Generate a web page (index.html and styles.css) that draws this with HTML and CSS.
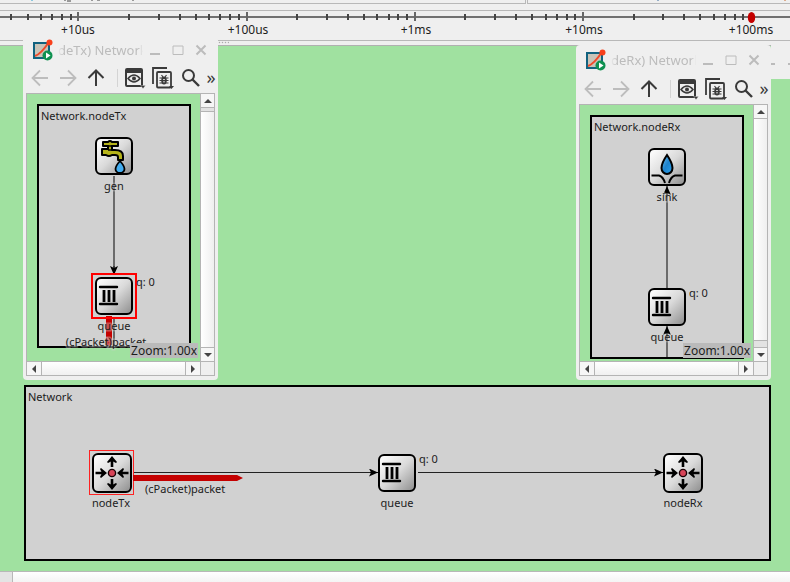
FILE: index.html
```html
<!DOCTYPE html>
<html lang="en">
<head>
<meta charset="utf-8">
<title>Network</title>
<link rel="stylesheet" href="styles.css">
</head>
<body>
<svg class="sprites" width="0" height="0" aria-hidden="true">
  <defs>
    <linearGradient id="tile" x1="0" y1="0" x2="1" y2="1">
      <stop offset="0.1" stop-color="#fafafa"/><stop offset="0.5" stop-color="#dadada"/><stop offset="1" stop-color="#8c8c8c"/>
    </linearGradient>
    <linearGradient id="water" x1="0" y1="0" x2="1" y2="1">
      <stop offset="0" stop-color="#7cc4ee"/><stop offset="0.5" stop-color="#1d82cc"/><stop offset="1" stop-color="#2da3ee"/>
    </linearGradient>
    <symbol id="queue" viewBox="0 0 38 38">
      <rect x="1" y="1" width="36" height="36" rx="5" fill="url(#tile)" stroke="#000" stroke-width="2"/>
      <path d="M5 10h17M5 27h17" stroke="#000" stroke-width="2.4" stroke-linecap="round"/>
      <path d="M9 13v12M14 13v12M19 13v12" stroke="#000" stroke-width="2.800"/>
    </symbol>
    <symbol id="router" viewBox="0 0 40 40">
      <rect x="1" y="1" width="38" height="38" rx="5" fill="url(#tile)" stroke="#000" stroke-width="2"/>
      <path d="M20 14V6M20 26v8M3.500 20H12M36.500 20H28" stroke="#000" stroke-width="2.6"/>
      <path d="M20 3l5 6-1 1-4-2-4 2-1-1zM20 37l5-6-1-1-4 2-4-2-1 1zM15 20l-6-5-1 1 2 4-2 4 1 1zM25 20l6-5 1 1-2 4 2 4-1 1z" fill="#000"/>
      <circle cx="20" cy="20" r="3.600" fill="#d84458" stroke="#1a0005" stroke-width="1.400"/>
    </symbol>
    <symbol id="tap" viewBox="0 0 38 38">
      <rect x="1" y="1" width="36" height="36" rx="5" fill="url(#tile)" stroke="#000" stroke-width="2"/>
      <path d="M8 5h5q2-2 4 0h6v4h-6v4h3q8 0 8 6v4h-5v-3q0-2-3-2h-3q-3 2-6 0H7v-6h6V9H8z" fill="#b5b319" stroke="#000" stroke-width="2" stroke-linejoin="round"/>
      <path d="M13 9h4M13 13h4" stroke="#000" stroke-width="1.500"/>
      <path d="M25 24q-4.500 5-4.500 8a4.500 4 0 0 0 9 0q0-3-4.500-8z" fill="#43adf0" stroke="#000" stroke-width="1.800"/>
    </symbol>
    <symbol id="sink" viewBox="0 0 38 38">
      <rect x="1" y="1" width="36" height="36" rx="5" fill="url(#tile)" stroke="#000" stroke-width="2"/>
      <path d="M19 7q-5.500 8-5.500 13a5.500 6 0 0 0 11 0q0-5-5.500-13z" fill="url(#water)" stroke="#000" stroke-width="2"/>
      <path d="M3.500 27.500H11q4 1 6 7.500M34.500 27.500H27q-4 1-6 7.500" fill="none" stroke="#000" stroke-width="2"/>
    </symbol>
    <symbol id="app" viewBox="0 0 22 22">
      <rect x="2" y="4" width="15" height="15" fill="#c9c4b8" stroke="#12627f" stroke-width="2"/>
      <path d="M3 17Q9 15 17 3" fill="none" stroke="#f04a2a" stroke-width="2"/>
      <circle cx="17.500" cy="3.500" r="3" fill="#f8401c"/>
      <circle cx="15.500" cy="16.500" r="5" fill="#0f9150"/><path d="M14 13.500l4.500 3-4.500 3z" fill="#fff"/>
    </symbol>
    <symbol id="back" viewBox="0 0 20 20"><path d="M18 10H2.500M10 2.500L2.500 10l7.500 7.500" fill="none" stroke="currentColor" stroke-width="1.800"/></symbol>
    <symbol id="forward" viewBox="0 0 20 20"><path d="M2 10h15.500M10 2.500l7.500 7.500-7.500 7.500" fill="none" stroke="currentColor" stroke-width="1.800"/></symbol>
    <symbol id="up" viewBox="0 0 20 20"><path d="M10 18V3M2.500 10L10 2.500l7.500 7.500" fill="none" stroke="currentColor" stroke-width="2"/></symbol>
    <symbol id="view" viewBox="0 0 22 22">
      <path d="M3 2h14q1 0 1 1v15q0 1-1 1H3q-1 0-1-1V3q0-1 1-1z" fill="none" stroke="currentColor" stroke-width="2"/><path d="M2 3h16v3H2z" fill="currentColor"/>
      <path d="M4 11.500q6-7 12 0q-6 7-12 0z" fill="none" stroke="currentColor" stroke-width="1.500"/><circle cx="10" cy="11.500" r="2" fill="currentColor"/>
      <path d="M16.500 18.500h5l-2.500 3z" fill="currentColor" stroke="#efefef" stroke-width=".3"/>
    </symbol>
    <symbol id="debug" viewBox="0 0 22 22">
      <path d="M1 17V1h14" fill="none" stroke="currentColor" stroke-width="1.800"/><rect x="5" y="5" width="14" height="15.500" rx="1" fill="none" stroke="currentColor" stroke-width="1.800"/>
      <ellipse cx="12" cy="13.500" rx="2.800" ry="4" fill="currentColor"/><path d="M7.500 11h9M7.500 13.500h9M7.500 16h9M9.500 8l1.500 2M14.500 8L13 10" stroke="currentColor" stroke-width="1.200"/><path d="M11 12.500h2M11 14.800h2" stroke="#efefef" stroke-width=".8"/>
      <path d="M17 19h5l-2.500 3z" fill="currentColor"/>
    </symbol>
    <symbol id="find" viewBox="0 0 20 20"><circle cx="7.500" cy="7.500" r="5.500" fill="none" stroke="currentColor" stroke-width="2"/><path d="M11.500 11.500l6.500 6.500" stroke="currentColor" stroke-width="2.400"/></symbol>
    <marker id="head" viewBox="0 0 9 8" markerWidth="9" markerHeight="8" refX="9" refY="4" orient="auto" markerUnits="userSpaceOnUse"><path d="M0 0l9 4-9 4 2-4z"/></marker>
  </defs>
</svg>

<header>
  <div class="strip">
    <div class="strip-left"><svg width="200" height="3"><path d="M64 0h2M67 1h4M91 0h2M97 0h3M132 0h2" stroke="#444"/><path d="M31 0h2" stroke="#2b9fce"/></svg></div>
    <div class="strip-right"><svg width="262" height="3"><path d="M129 0h2" stroke="#3d6fa0"/><path d="M256 0h2" stroke="#c96a2c"/></svg></div>
  </div>
  <svg class="ruler" width="100%" height="29">
    <line x1="0" y1="6" x2="100%" y2="6" stroke="#717171" stroke-width="2"/>
    <path d="M11 3v6M28 3v6M41 3v6M52 3v6M62 3v6M71 3v6M129 3v6M159 3v6M180 3v6M196 3v6M209 3v6M220 3v6M230 3v6M239 3v6M297 3v6M327 3v6M348 3v6M364 3v6M377 3v6M389 3v6M398 3v6M407 3v6M465 3v6M495 3v6M516 3v6M532 3v6M546 3v6M557 3v6M567 3v6M575 3v6M634 3v6M663 3v6M684 3v6M700 3v6M714 3v6M725 3v6M735 3v6M743 3v6" stroke="#444" stroke-width="2"/>
    <path d="M78 1v9M247 1v9M415 1v9M583 1v9" stroke="#666" stroke-width="2"/>
    <ellipse cx="751.500" cy="6.500" rx="3.700" ry="5.500" fill="#c40000"/>
    <g text-anchor="middle"><text x="78" y="23">+10us</text><text x="248" y="23">+100us</text><text x="416" y="23">+1ms</text><text x="584" y="23">+10ms</text><text x="751" y="23">+100ms</text></g>
  </svg>
  <div class="splitter"></div>
</header>

<main class="desktop">
  <div class="remnant"><svg width="19" height="34"><path d="M0 19h4M17 19h2" stroke="#bbb" stroke-width="2"/></svg></div>

  <section class="network">
    <svg width="100%" height="172" viewBox="26 387 743 172" preserveAspectRatio="xMinYMin meet" role="img" aria-label="Network">
      <text x="28" y="401">Network</text>
      <path d="M134 472.500H378M418 472.500H663" stroke="#222"/>
      <path d="M370 472.500H378" stroke="#111" marker-end="url(#head)"/><path d="M655 472.500H663" stroke="#111" marker-end="url(#head)"/>
      <use href="#router" x="92" y="453" width="40" height="40"/><rect x="89.500" y="450.500" width="44" height="44" fill="none" stroke="#f22"/>
      <path d="M133 475h104l6 3-6 3H133z" fill="#c40000"/>
      <use href="#queue" x="378" y="454" width="38" height="38"/>
      <use href="#router" x="663" y="453" width="40" height="40"/>
      <text x="145" y="493">(cPacket)packet</text><text x="419" y="463">q: 0</text>
      <g text-anchor="middle"><text x="111" y="507">nodeTx</text><text x="397" y="507">queue</text><text x="683" y="507">nodeRx</text></g>
    </svg>
  </section>

  <section class="window window-tx">
    <div class="titlebar"><svg width="22" height="22"><use href="#app"/></svg><span class="title">deTx) Network</span>
      <button aria-label="Minimize"><svg width="12" height="12"><path d="M1 10h10"/></svg></button><button aria-label="Maximize"><svg width="12" height="12"><path d="M1 2h10v8.500H1z"/></svg></button><button aria-label="Close"><svg width="12" height="12"><path d="M1.500 1.500l9 9M10.500 1.500l-9 9"/></svg></button></div>
    <div class="toolbar"><button disabled aria-label="Back"><svg width="20" height="20"><use href="#back"/></svg></button><button disabled aria-label="Forward"><svg width="20" height="20"><use href="#forward"/></svg></button><button aria-label="Parent"><svg width="20" height="20"><use href="#up"/></svg></button><i></i><button aria-label="View"><svg width="22" height="22"><use href="#view"/></svg></button><button aria-label="Debug"><svg width="22" height="22"><use href="#debug"/></svg></button><button aria-label="Find"><svg width="20" height="20"><use href="#find"/></svg></button><button class="more" aria-label="More">»</button></div>
    <div class="view">
      <div class="viewport">
        <svg width="174" height="267" viewBox="27 94 174 267" role="img" aria-label="Network.nodeTx">
          <rect x="38" y="105" width="152" height="242" fill="#d1d1d1" stroke="#000" stroke-width="2"/>
          <text x="41" y="120">Network.nodeTx</text>
          <path d="M114 176V270M114 318V347" stroke="#6b6b6b" stroke-width="2"/><path d="M114 266V275" stroke="#111" marker-end="url(#head)"/>
          <use href="#tap" x="95" y="137" width="38" height="38"/><use href="#queue" x="95" y="277" width="38" height="38"/>
          <path d="M106 316h6v29l-3 1-3-1z" fill="#c40000"/>
          <rect x="92" y="274" width="44" height="44" fill="none" stroke="#f00" stroke-width="2"/>
          <g text-anchor="middle"><text class="over" x="114" y="190">gen</text><text class="over" x="114" y="330">queue</text><text class="over" x="106" y="346">(cPacket)packet</text></g><text x="136" y="286">q: 0</text>
        </svg>
        <span class="zoom">Zoom:1.00x</span>
      </div>
      <div class="vbar"><button aria-label="Scroll up"><svg width="8" height="4"><path d="M0 4l4-4 4 4z"/></svg></button><div class="groove"></div><div class="handle"></div><button aria-label="Scroll down"><svg width="8" height="4"><path d="M0 0l4 4 4-4z"/></svg></button></div>
      <div class="hbar"><button aria-label="Scroll left"><svg width="4" height="8"><path d="M4 0L0 4l4 4z"/></svg></button><div class="handle"></div><button aria-label="Scroll right"><svg width="4" height="8"><path d="M0 0l4 4-4 4z"/></svg></button></div>
      <div class="corner"></div>
    </div>
  </section>

  <section class="window window-rx">
    <div class="titlebar"><svg width="22" height="22"><use href="#app"/></svg><span class="title">deRx) Network</span>
      <button aria-label="Minimize"><svg width="12" height="12"><path d="M1 10h10"/></svg></button><button aria-label="Maximize"><svg width="12" height="12"><path d="M1 2h10v8.500H1z"/></svg></button><button aria-label="Close"><svg width="12" height="12"><path d="M1.500 1.500l9 9M10.500 1.500l-9 9"/></svg></button></div>
    <div class="toolbar"><button disabled aria-label="Back"><svg width="20" height="20"><use href="#back"/></svg></button><button disabled aria-label="Forward"><svg width="20" height="20"><use href="#forward"/></svg></button><button aria-label="Parent"><svg width="20" height="20"><use href="#up"/></svg></button><i></i><button aria-label="View"><svg width="22" height="22"><use href="#view"/></svg></button><button aria-label="Debug"><svg width="22" height="22"><use href="#debug"/></svg></button><button aria-label="Find"><svg width="20" height="20"><use href="#find"/></svg></button><button class="more" aria-label="More">»</button></div>
    <div class="view">
      <div class="viewport">
        <svg width="174" height="256" viewBox="580 105 174 256" role="img" aria-label="Network.nodeRx">
          <rect x="591" y="116" width="152" height="242" fill="#d1d1d1" stroke="#000" stroke-width="2"/>
          <text x="594" y="131">Network.nodeRx</text>
          <path d="M667 288V192M667 357V332" stroke="#6b6b6b" stroke-width="2"/>
          <path d="M667 195V186" stroke="#111" marker-end="url(#head)"/><path d="M667 335V326" stroke="#111" marker-end="url(#head)"/>
          <use href="#sink" x="648" y="148" width="38" height="38"/><use href="#queue" x="648" y="288" width="38" height="38"/>
          <g text-anchor="middle"><text class="over" x="667" y="201">sink</text><text class="over" x="667" y="341">queue</text></g><text x="689" y="297">q: 0</text>
        </svg>
        <span class="zoom">Zoom:1.00x</span>
      </div>
      <div class="vbar"><button aria-label="Scroll up"><svg width="8" height="4"><path d="M0 4l4-4 4 4z"/></svg></button><div class="handle"></div><div class="groove wide"></div><button aria-label="Scroll down"><svg width="8" height="4"><path d="M0 0l4 4 4-4z"/></svg></button></div>
      <div class="hbar"><button aria-label="Scroll left"><svg width="4" height="8"><path d="M4 0L0 4l4 4z"/></svg></button><div class="handle"></div><button aria-label="Scroll right"><svg width="4" height="8"><path d="M0 0l4 4-4 4z"/></svg></button></div>
      <div class="corner"></div>
    </div>
  </section>
</main>
<footer class="scroll"><div class="scroll-groove"></div><div class="scroll-handle"></div></footer>
</body>
</html>
```
FILE: styles.css
```css
* { box-sizing: border-box; }
body {
  margin: 0;
  min-height: 100vh;
  display: flex;
  flex-direction: column;
  overflow: hidden;
  background: #efefef;
  color: #1c1c1c;
  font: 11px/16px "Noto Sans", "Open Sans", sans-serif;
}
svg { display: block; }
text { fill: #1c1c1c; }
.sprites { position: absolute; }

.strip { display: flex; gap: 1px; height: 11px; padding-bottom: 7px; border-bottom: 1px solid #b8b8b8; }
.strip-left, .strip-right { overflow: hidden; border-bottom: 1px solid #b8b8b8; height: 4px; }
.strip-left { flex: 2; border-right: 1px solid #b8b8b8; }
.strip-right { flex: 1; border-left: 1px solid #b8b8b8; }
.ruler { border-bottom: 1px solid #b8b8b8; height: 30px; font-size: 12px; }
.splitter { width: 11px; height: 4px; margin-left: 218px; background: radial-gradient(circle, #aaa 30%, transparent 50%) 0 0 / 3px 3px repeat-x; }

.desktop { position: relative; flex: 1; background: #a0e1a0; border-top: 1px solid #b0b0b0; }
.network { position: absolute; left: 24px; right: 19px; top: 339px; height: 176px; background: #d1d1d1; border: 2px solid #000; }
.remnant { position: absolute; right: 0; top: -1px; background: #efefef; }

.window { position: absolute; display: flex; flex-direction: column; width: 195px; padding: 0 3px 4px; background: #efefef; border-radius: 4px; }
.window-tx { left: 23px; top: -10px; }
.window-rx { left: 576px; top: -1px; }
.titlebar { display: flex; align-items: center; height: 27px; padding: 0 3px 0 6px; color: #bcbcbc; }
.window-rx .titlebar { height: 29px; }
.title { flex: 1; min-width: 0; margin-left: 4px; overflow: hidden; white-space: nowrap; font-size: 13px; line-height: 20px; mask-image: linear-gradient(90deg, transparent, #000 6px, #000 80px, transparent); }
button { display: flex; align-items: center; justify-content: center; margin: 0; padding: 0; border: 0; background: none; color: #3a3a3a; font: inherit; }
.titlebar button { width: 23px; height: 20px; }
.titlebar button path { fill: none; stroke: #bcbcbc; stroke-width: 2; }
.titlebar button:nth-of-type(2) path { stroke-width: 1; }
.toolbar { display: flex; align-items: center; height: 30px; }
.toolbar button { flex: none; width: 28px; height: 28px; }
.toolbar button:disabled { color: #bdbdbd; }
.toolbar i { width: 8px; flex: none; height: 18px; border-right: 1px solid #d4d4d4; margin-right: 3px; }
.toolbar .more { width: 12px; padding-bottom: 2px; font-size: 18px; }

.view { display: grid; grid-template-columns: 1fr 14px; grid-template-rows: 1fr 14px; border: 1px solid #b4b4b4; background: #a0e1a0; }
.viewport { position: relative; overflow: hidden; }
.over { paint-order: stroke; stroke: rgba(209, 209, 209, 0.4); stroke-width: 3px; }
.zoom { position: absolute; right: 2px; bottom: 3px; padding: 0 1px; background: #bababa; font-size: 12px; line-height: 15px; }
.vbar, .hbar { display: flex; background: #e2e2e2; }
.vbar { flex-direction: column; border-left: 1px solid #b4b4b4; }
.hbar { border-top: 1px solid #b4b4b4; }
.vbar button { height: 13px; }
.hbar button { width: 14px; }
.vbar button, .hbar button { background: #f6f6f6; }
.vbar button path, .hbar button path { fill: #444; }
.handle { flex: 1; }
.vbar .handle { border-top: 1px solid #b4b4b4; border-bottom: 1px solid #b4b4b4; background: linear-gradient(90deg, #fff, #efefef); }
.hbar .handle { border-left: 1px solid #b4b4b4; border-right: 1px solid #b4b4b4; background: linear-gradient(#fff, #f0f0f0); }
.groove { height: 4px; border-top: 1px solid #b4b4b4; }
.groove.wide { height: 7px; border-top: 0; border-bottom: 1px solid #b4b4b4; }
.corner { border-top: 1px solid #b4b4b4; border-left: 1px solid #b4b4b4; background: #efefef; }

.scroll { display: flex; height: 11px; border-top: 1px solid #b8b8b8; }
.scroll-groove { width: 13px; border-right: 1px solid #b8b8b8; background: #e4e4e4; }
.scroll-handle { flex: 1; background: linear-gradient(#fff, #f4f4f4); }
```
